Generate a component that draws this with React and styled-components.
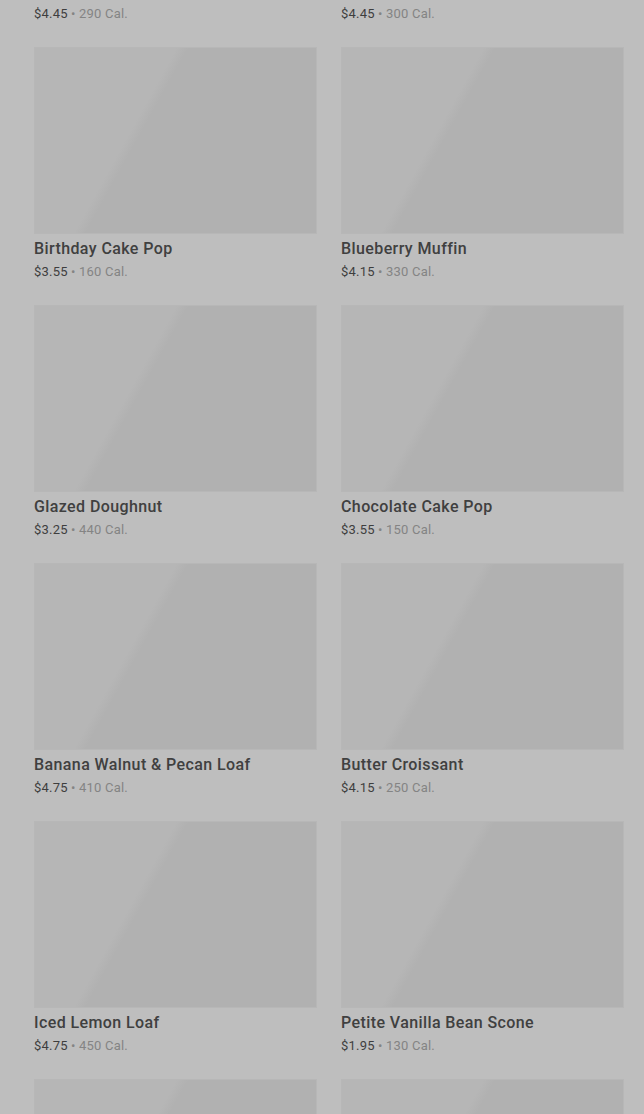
import React from "react";
import styled, { createGlobalStyle } from "styled-components";

const items = [
  { name: "Chocolate Croissant", price: "$4.45", cal: 290 },
  { name: "Cheese Danish", price: "$4.45", cal: 300 },
  { name: "Birthday Cake Pop", price: "$3.55", cal: 160 },
  { name: "Blueberry Muffin", price: "$4.15", cal: 330 },
  { name: "Glazed Doughnut", price: "$3.25", cal: 440 },
  { name: "Chocolate Cake Pop", price: "$3.55", cal: 150 },
  { name: "Banana Walnut & Pecan Loaf", price: "$4.75", cal: 410 },
  { name: "Butter Croissant", price: "$4.15", cal: 250 },
  { name: "Iced Lemon Loaf", price: "$4.75", cal: 450 },
  { name: "Petite Vanilla Bean Scone", price: "$1.95", cal: 130 },
  { name: "Cinnamon Coffee Cake", price: "$3.95", cal: 380 },
  { name: "Ham & Swiss Croissant", price: "$5.25", cal: 320 },
];

function App() {
  return (
    <>
      <GlobalStyle />
      <StPage>
        <StGrid>
          {items.map((item) => (
            <StCard key={item.name}>
              <StImage />
              <StTitle>{item.name}</StTitle>
              <StMeta>
                <StPrice>{item.price}</StPrice>
                <StCal> • {item.cal} Cal.</StCal>
              </StMeta>
            </StCard>
          ))}
        </StGrid>
      </StPage>
    </>
  );
}

//styled-components
const GlobalStyle = createGlobalStyle`
  html, body {
    margin: 0;
    padding: 0;
    background: #bebebe;
    overflow: hidden;
    font-family: Roboto, "Liberation Sans", sans-serif;
  }
`;

const StPage = styled.div`
  width: 644px;
  height: 1114px;
  overflow: hidden;
  background: #bebebe;
`;

const StGrid = styled.div`
  display: grid;
  grid-template-columns: 283px 283px;
  column-gap: 24px;
  row-gap: 24px;
  padding: 0 20px 0 34px;
  margin-top: -211px;
`;

const StCard = styled.div`
  display: flex;
  flex-direction: column;
`;

const StImage = styled.div`
  height: 187px;
  background: linear-gradient(
    119deg,
    #b6b6b6 0%,
    #b6b6b6 37%,
    #b1b1b1 40%,
    #b1b1b1 100%
  );
  box-shadow: inset 0 0 0 1px #b7b7b7;
`;

const StTitle = styled.div`
  margin-top: 5px;
  font-size: 16px;
  line-height: 20px;
  font-weight: 500;
  color: #404040;
  letter-spacing: 0.4px;
`;

const StMeta = styled.div`
  margin-top: 4px;
  font-size: 13px;
  line-height: 18px;
  letter-spacing: 0.2px;
`;

const StPrice = styled.span`
  color: #3e3e3e;
`;

const StCal = styled.span`
  color: #848484;
`;

export default App;
